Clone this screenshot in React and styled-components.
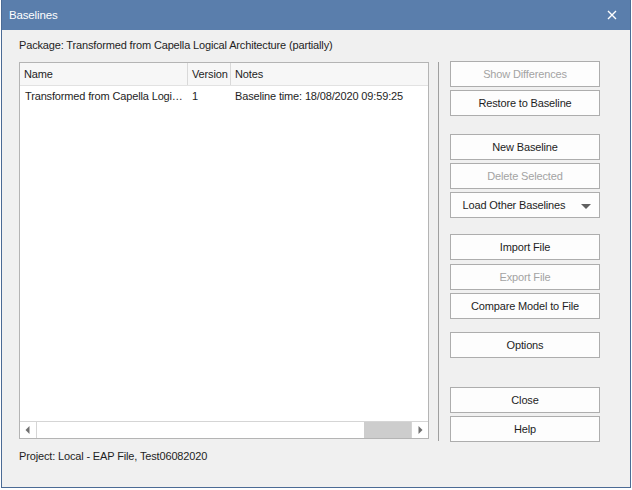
import React from 'react';
import styled, { createGlobalStyle } from 'styled-components';

const GlobalStyle = createGlobalStyle`
        *, *::before, *::after {
                box-sizing: border-box;
        }
        body {
                margin: 0;
                background: #ffffff;
                font-family: "Liberation Sans", Arial, sans-serif;
                font-size: 11px;
                letter-spacing: -0.15px;
                color: #1e1e1e;
        }
`;

const Window = styled.div`
        width: 630px;
        height: 488px;
        margin-left: 1px;
        border: 1px solid #4b6b95;
        border-top: none;
        background: #f0f0f0;
        display: flex;
        flex-direction: column;
`;

const TitleBar = styled.div`
        height: 30px;
        background: #5a7eac;
        color: #ffffff;
        display: flex;
        align-items: center;
        justify-content: space-between;
        padding: 0 13px 1px 7px;
        font-size: 11.5px;
`;

const Body = styled.div`
        flex: 1;
        display: flex;
        flex-direction: column;
        padding: 7px 0 0 17px;
`;

const Label = styled.div`
        height: 16px;
        line-height: 16px;
        margin-bottom: ${(p) => p.$gap || 0}px;
`;

const Main = styled.div`
        display: flex;
        align-items: flex-start;
        height: 385px;
`;

const ListBox = styled.div`
        margin-top: 1px;
        width: 410px;
        height: 377px;
        border: 1px solid #b4b4b4;
        background: #ffffff;
        display: flex;
        flex-direction: column;
`;

const Header = styled.div`
        display: flex;
        height: 23px;
        background: #f7f7f7;
        border-bottom: 1px solid #e2e2e2;
`;

const HeadCell = styled.div`
        width: ${(p) => p.$w}px;
        flex: ${(p) => (p.$grow ? 1 : 'none')};
        padding-left: 4px;
        line-height: 22px;
        border-right: ${(p) => (p.$grow ? 'none' : '1px solid #d9d9d9')};
`;

const Rows = styled.div`
        flex: 1;
`;

const Row = styled.div`
        display: flex;
        height: 18px;
        line-height: 18px;
        margin-top: 1px;
`;

const Cell = styled.div`
        width: ${(p) => p.$w}px;
        flex: ${(p) => (p.$grow ? 1 : 'none')};
        padding-left: ${(p) => p.$pad || 4}px;
        white-space: nowrap;
        overflow: hidden;
`;

const HScroll = styled.div`
        height: 17px;
        display: flex;
        border-top: 1px solid #d5d5d5;
        background: #ffffff;
`;

const Arrow = styled.div`
        width: 17px;
        display: flex;
        align-items: center;
        justify-content: center;
        border-left: ${(p) => (p.$side === 'right' ? '1px solid #d5d5d5' : 'none')};
        border-right: ${(p) => (p.$side === 'left' ? '1px solid #d5d5d5' : 'none')};
`;

const Track = styled.div`
        flex: 1;
        display: flex;
`;

const Thumb = styled.div`
        flex: 1;
        background: #ffffff;
`;

const TrackRest = styled.div`
        width: 47px;
        background: #cdcdcd;
`;

const Divider = styled.div`
        width: 1px;
        height: 379px;
        margin: 1px 11px 0 9px;
        background: #a0a0a0;
`;

const Buttons = styled.div`
        display: flex;
        flex-direction: column;
`;

const Button = styled.div`
        width: 150px;
        height: 26px;
        border: 1px solid #adadad;
        background: #fdfdfd;
        color: ${(p) => (p.$disabled ? '#a3a3a3' : '#1e1e1e')};
        display: flex;
        align-items: center;
        justify-content: center;
        position: relative;
        margin-top: ${(p) => p.$top ?? 3}px;
`;

const MenuText = styled.span`
        margin-right: 22px;
`;

const Caret = styled.span`
        position: absolute;
        right: 8px;
        top: 11px;
        width: 0;
        height: 0;
        border-left: 5px solid transparent;
        border-right: 5px solid transparent;
        border-top: 5px solid #606060;
`;

const Footer = styled.div`
        margin-top: 4px;
`;

const ArrowIcon = ({ dir }) => (
        <svg width="6" height="8" viewBox="0 0 6 8">
                {dir === 'left' ? (
                        <polygon points="4.5,0 4.5,8 0.5,4" fill="#707070" />
                ) : (
                        <polygon points="1.5,0 1.5,8 5.5,4" fill="#707070" />
                )}
        </svg>
);

const CloseIcon = () => (
        <svg width="10" height="10" viewBox="0 0 10 10">
                <path d="M1 1 L9 9 M9 1 L1 9" stroke="#ffffff" strokeWidth="1.4" />
        </svg>
);

function App() {
        return (
                <>
                        <GlobalStyle />
                        <Window>
                                <TitleBar>
                                        <span>Baselines</span>
                                        <CloseIcon />
                                </TitleBar>
                                <Body>
                                        <Label $gap={8}>Package: Transformed from Capella Logical Architecture (partially)</Label>
                                        <Main>
                                                <ListBox>
                                                        <Header>
                                                                <HeadCell $w={168}>Name</HeadCell>
                                                                <HeadCell $w={43}>Version</HeadCell>
                                                                <HeadCell $grow>Notes</HeadCell>
                                                        </Header>
                                                        <Rows>
                                                                <Row>
                                                                        <Cell $w={168} $pad={5}>Transformed from Capella Logi…</Cell>
                                                                        <Cell $w={43}>1</Cell>
                                                                        <Cell $grow>Baseline time: 18/08/2020 09:59:25</Cell>
                                                                </Row>
                                                        </Rows>
                                                        <HScroll>
                                                                <Arrow $side="left">
                                                                        <ArrowIcon dir="left" />
                                                                </Arrow>
                                                                <Track>
                                                                        <Thumb />
                                                                        <TrackRest />
                                                                </Track>
                                                                <Arrow $side="right">
                                                                        <ArrowIcon dir="right" />
                                                                </Arrow>
                                                        </HScroll>
                                                </ListBox>
                                                <Divider />
                                                <Buttons>
                                                        <Button $top={0} $disabled>Show Differences</Button>
                                                        <Button>Restore to Baseline</Button>
                                                        <Button $top={18}>New Baseline</Button>
                                                        <Button $disabled>Delete Selected</Button>
                                                        <Button>
                                                                <MenuText>Load Other Baselines</MenuText>
                                                                <Caret />
                                                        </Button>
                                                        <Button $top={16}>Import File</Button>
                                                        <Button $top={4} $disabled>Export File</Button>
                                                        <Button>Compare Model to File</Button>
                                                        <Button $top={13}>Options</Button>
                                                        <Button $top={29}>Close</Button>
                                                        <Button>Help</Button>
                                                </Buttons>
                                        </Main>
                                        <Footer>Project: Local - EAP File, Test06082020</Footer>
                                </Body>
                        </Window>
                </>
        );
}

export default App;
